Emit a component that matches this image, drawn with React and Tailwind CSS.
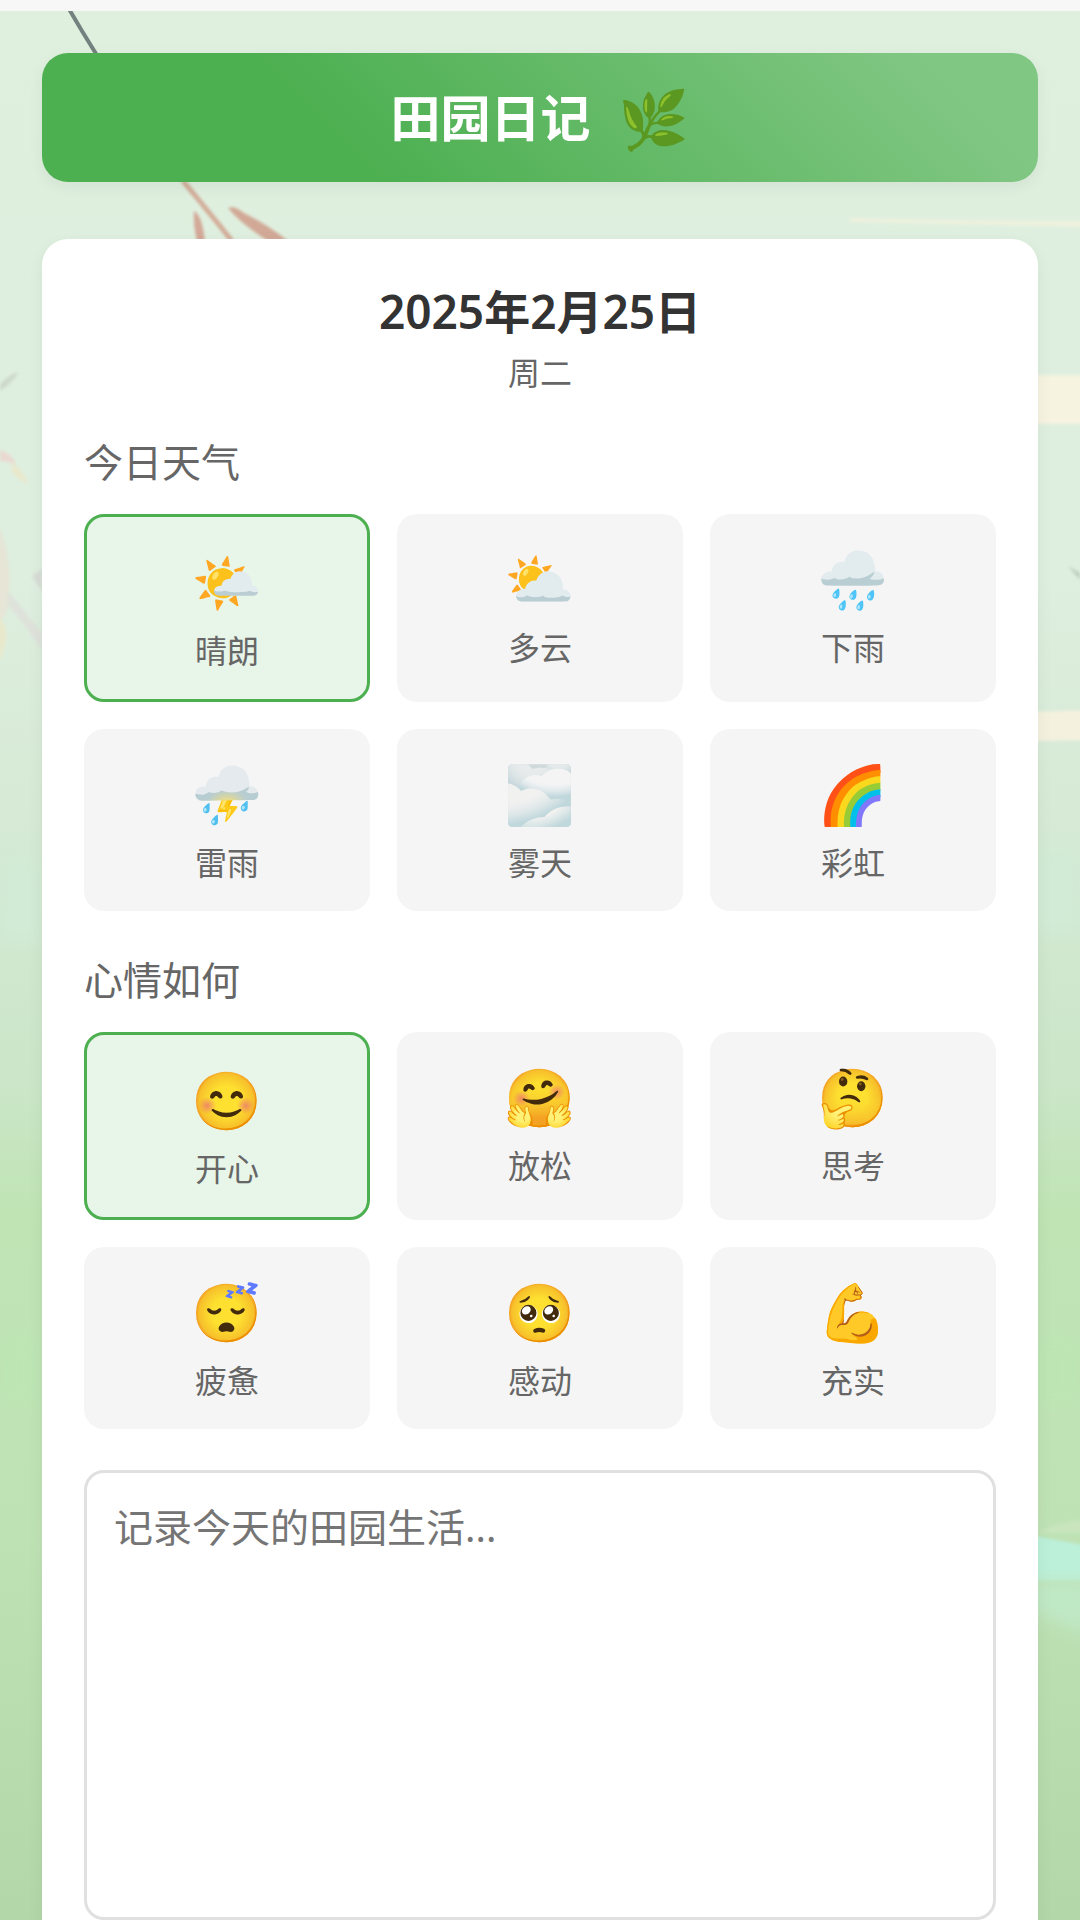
import { useState } from "react";

const weather = [
  ["🌤️", "晴朗"],
  ["⛅", "多云"],
  ["🌧️", "下雨"],
  ["⛈️", "雷雨"],
  ["🌫️", "雾天"],
  ["🌈", "彩虹"],
];

const moods = [
  ["😊", "开心"],
  ["🤗", "放松"],
  ["🤔", "思考"],
  ["😴", "疲惫"],
  ["🥺", "感动"],
  ["💪", "充实"],
];

function Scenery() {
  return (
    <svg
      className="absolute inset-0 h-full w-full"
      viewBox="0 0 1080 1909"
      preserveAspectRatio="none"
      aria-hidden="true"
    >
      <defs>
        <filter id="soft" x="-20%" y="-20%" width="140%" height="140%">
          <feGaussianBlur stdDeviation="1.5" />
        </filter>
        <filter id="haze" x="-20%" y="-50%" width="140%" height="200%">
          <feGaussianBlur stdDeviation="8" />
        </filter>
      </defs>
      <path d="M69 -2L82 20L98 46" stroke="#73817f" strokeWidth="4" fill="none" />
      <g filter="url(#soft)">
        <path d="M183 170Q204 195 232 230" stroke="#d2ac98" strokeWidth="5" fill="none" />
        <path d="M194 200Q202 204 205 230H197Q193 214 194 200Z" fill="#d3a898" />
        <path d="M228 197Q234 194 244 202Q268 214 288 230H268Q240 212 228 197Z" fill="#d2a896" />
        <path d="M850 207Q960 210 1090 210V216Q960 213 850 211Z" fill="#eef1dd" />
        <path d="M1030 364H1090V413H1030Z" fill="#f6f3e1" />
        <path d="M1030 701L1090 699V729L1030 730Z" fill="#f5f1df" />
        <path d="M0 373Q10 363 18 361L17 364Q10 374 0 380Z" fill="#cddacb" />
        <path d="M0 439Q14 444 16 454Q8 450 0 450Z" fill="#ead9d0" />
        <path d="M12 452Q24 460 28 473Q20 470 12 461Z" fill="#e9e8cb" />
        <path d="M-8 505Q16 540 7 600L-8 625Z" fill="#e6e5d6" />
        <path d="M-8 600Q14 612 2 645L-8 655Z" fill="#e8e9cc" />
        <path d="M8 580L42 622V640Q24 612 8 594Z" fill="#dee2da" />
        <path d="M32 565L42 558V580Z" fill="#d7ddd5" />
        <path d="M1068 555L1080 562V569Z" fill="#bccfbd" />
      </g>
      <g filter="url(#haze)" fill="none">
        <path d="M1030 880H1080M0 890H42" stroke="#d2ebd6" strokeWidth="80" />
        <path d="M0 1360H42M1030 1360H1080" stroke="#bde5b4" strokeWidth="70" />
      </g>
      <path d="M1030 1524Q1060 1530 1090 1535V1570H1030Z" fill="#bcf0d9" filter="url(#soft)" />
      <path d="M1030 1570H1090V1625L1030 1600Z" fill="#bfe8c5" filter="url(#haze)" />
      <path d="M1036 1522Q1060 1510 1090 1508V1522Z" fill="#c8e5bd" filter="url(#soft)" />
    </svg>
  );
}

function ChoiceGroup({ title, items }) {
  const [selected, setSelected] = useState(0);
  return (
    <section>
      <h3 className="text-[39px] leading-[56px] text-[#666666]">{title}</h3>
      <div className="mt-6 grid grid-cols-3 gap-[27px]">
        {items.map(([icon, label], i) => (
          <button
            key={label}
            type="button"
            aria-pressed={i === selected}
            onClick={() => setSelected(i)}
            className={
              "flex flex-col items-center rounded-[20px] pt-7 pb-6 " +
              (i === selected
                ? "border-[3px] border-[#4caf50] bg-[#e8f5e9]"
                : "bg-[#f5f5f5]")
            }
          >
            <span className="text-[57px] leading-[72px]">{icon}</span>
            <span className="mt-2.5 text-[32px] leading-[48px] text-[#666666]">{label}</span>
          </button>
        ))}
      </div>
    </section>
  );
}

export default function App() {
  return (
    <div className="flex h-screen flex-col overflow-hidden font-['Noto_Sans','Noto_Sans_CJK_SC','Noto_Color_Emoji',sans-serif]">
      <div className="h-[11px] shrink-0 bg-[#f7f7f7]" />
      <div className="relative min-h-0 flex-1 overflow-hidden bg-linear-[180deg,#e0f0df_0%,#deeedf_30%,#d6ead5_42%,#cbe6c9_56%,#c0e4b4_63%,#bfe2b5_80%,#b3d7a9_100%]">
        <Scenery />
        <main className="relative px-[42px] pt-[42px]">
          <header className="flex items-center justify-center gap-7 rounded-[26px] bg-linear-[45deg,#4caf50_30%,#81c784_90%] pt-[29px] pb-[27px] shadow-[0_5px_16px_rgba(0,0,0,0.06)]">
            <h1 className="text-[50px] leading-[73px] font-bold text-white">田园日记</h1>
            <span className="text-[57px] leading-[73px]">🌿</span>
          </header>
          <div className="mt-[57px] rounded-[26px] bg-white px-[42px] pt-10 pb-10 shadow-[0_5px_16px_rgba(0,0,0,0.06)]">
            <div className="text-center">
              <h2 className="text-[46px] leading-[64px] font-semibold text-[#333333]">2025年2月25日</h2>
              <p className="mt-1.5 text-[32px] leading-[48px] text-[#666666]">周二</p>
            </div>
            <div className="mt-[37px] flex flex-col gap-[41px]">
              <ChoiceGroup title="今日天气" items={weather} />
              <ChoiceGroup title="心情如何" items={moods} />
              <textarea
                aria-label="日记内容"
                placeholder="记录今天的田园生活..."
                className="block h-[450px] w-full resize-none rounded-[20px] border-[3px] border-[#e0e0e0] bg-white px-[27px] py-6 text-[39px] leading-[60px] text-[#333333] placeholder-[#757575] outline-none"
              />
            </div>
          </div>
        </main>
      </div>
    </div>
  );
}
